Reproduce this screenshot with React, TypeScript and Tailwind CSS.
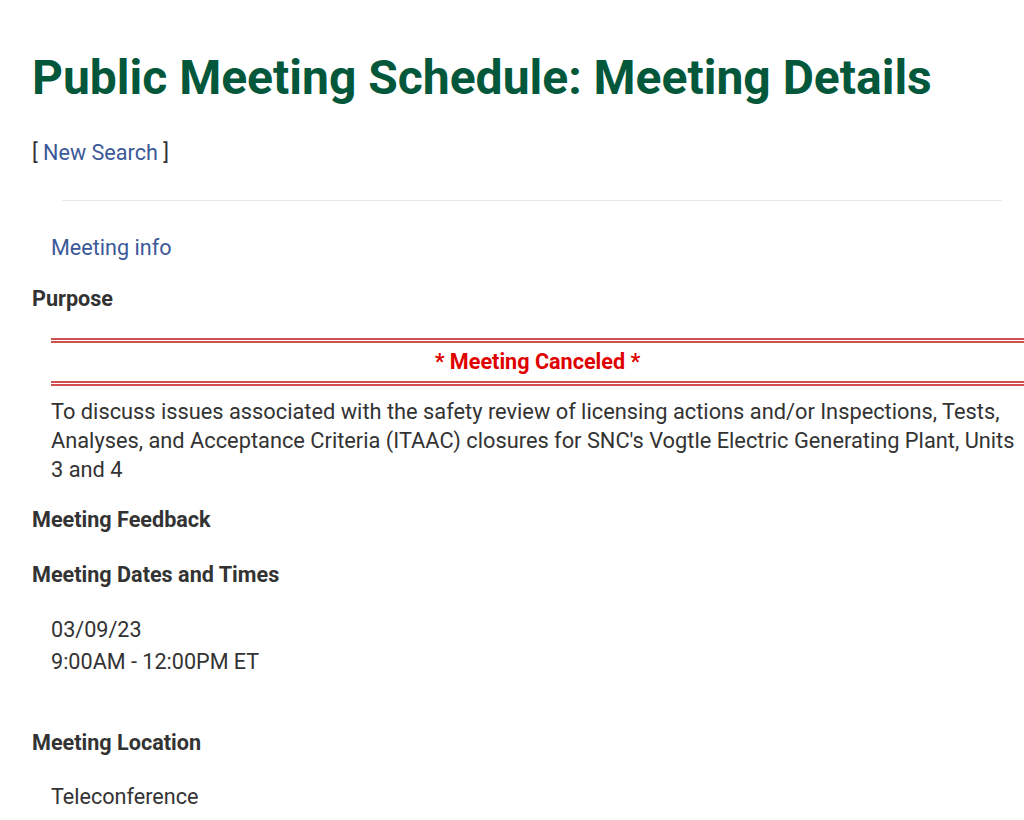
export default function App() {
  return (
    <div className="min-h-[820px] bg-white pl-[32px] pt-[50px] text-[#333333]" style={{ fontFamily: 'Roboto, "Liberation Sans", sans-serif' }}>
      <h1 className="text-[48px] font-bold leading-[56px] text-[#03573a]">Public Meeting Schedule: Meeting Details</h1>

      <p className="mt-[32px] text-[21.6px] leading-[30px]">
        [ <a className="text-[#3b5998]">New Search</a> ]
      </p>

      <hr className="mt-[32px] ml-[30px] mr-[22px] border-t border-[#e8e8e8]" />

      <div className="mt-[32px] ml-[19px] text-[21.6px] leading-[30px] text-[#3b5998]">Meeting info</div>

      <h3 className="mt-[21px] text-[21.6px] font-bold leading-[30px]">Purpose</h3>

      <div className="mt-[24px] ml-[19px] border-y-[5px] border-double border-[#d05050] py-[5px] text-center text-[21.6px] font-bold leading-[28px] text-[#e00000]">
        * Meeting Canceled *
      </div>

      <p className="ml-[19px] mt-[11px] pr-[4px] text-[21.8px] leading-[29px]">
        To discuss issues associated with the safety review of licensing actions and/or Inspections, Tests, Analyses, and Acceptance Criteria (ITAAC) closures for SNC's Vogtle Electric Generating Plant, Units 3 and 4
      </p>

      <h3 className="mt-[21px] text-[21.6px] font-bold leading-[30px]">Meeting Feedback</h3>

      <h3 className="mt-[25px] text-[21.6px] font-bold leading-[30px]">Meeting Dates and Times</h3>

      <div className="mt-[24px] ml-[19px] text-[21.6px] leading-[32px]">
        <div>03/09/23</div>
        <div>9:00AM - 12:00PM ET</div>
      </div>

      <h3 className="mt-[50px] text-[21.6px] font-bold leading-[30px]">Meeting Location</h3>

      <div className="mt-[24px] ml-[19px] text-[21.6px] leading-[30px]">Teleconference</div>
    </div>
  );
}
